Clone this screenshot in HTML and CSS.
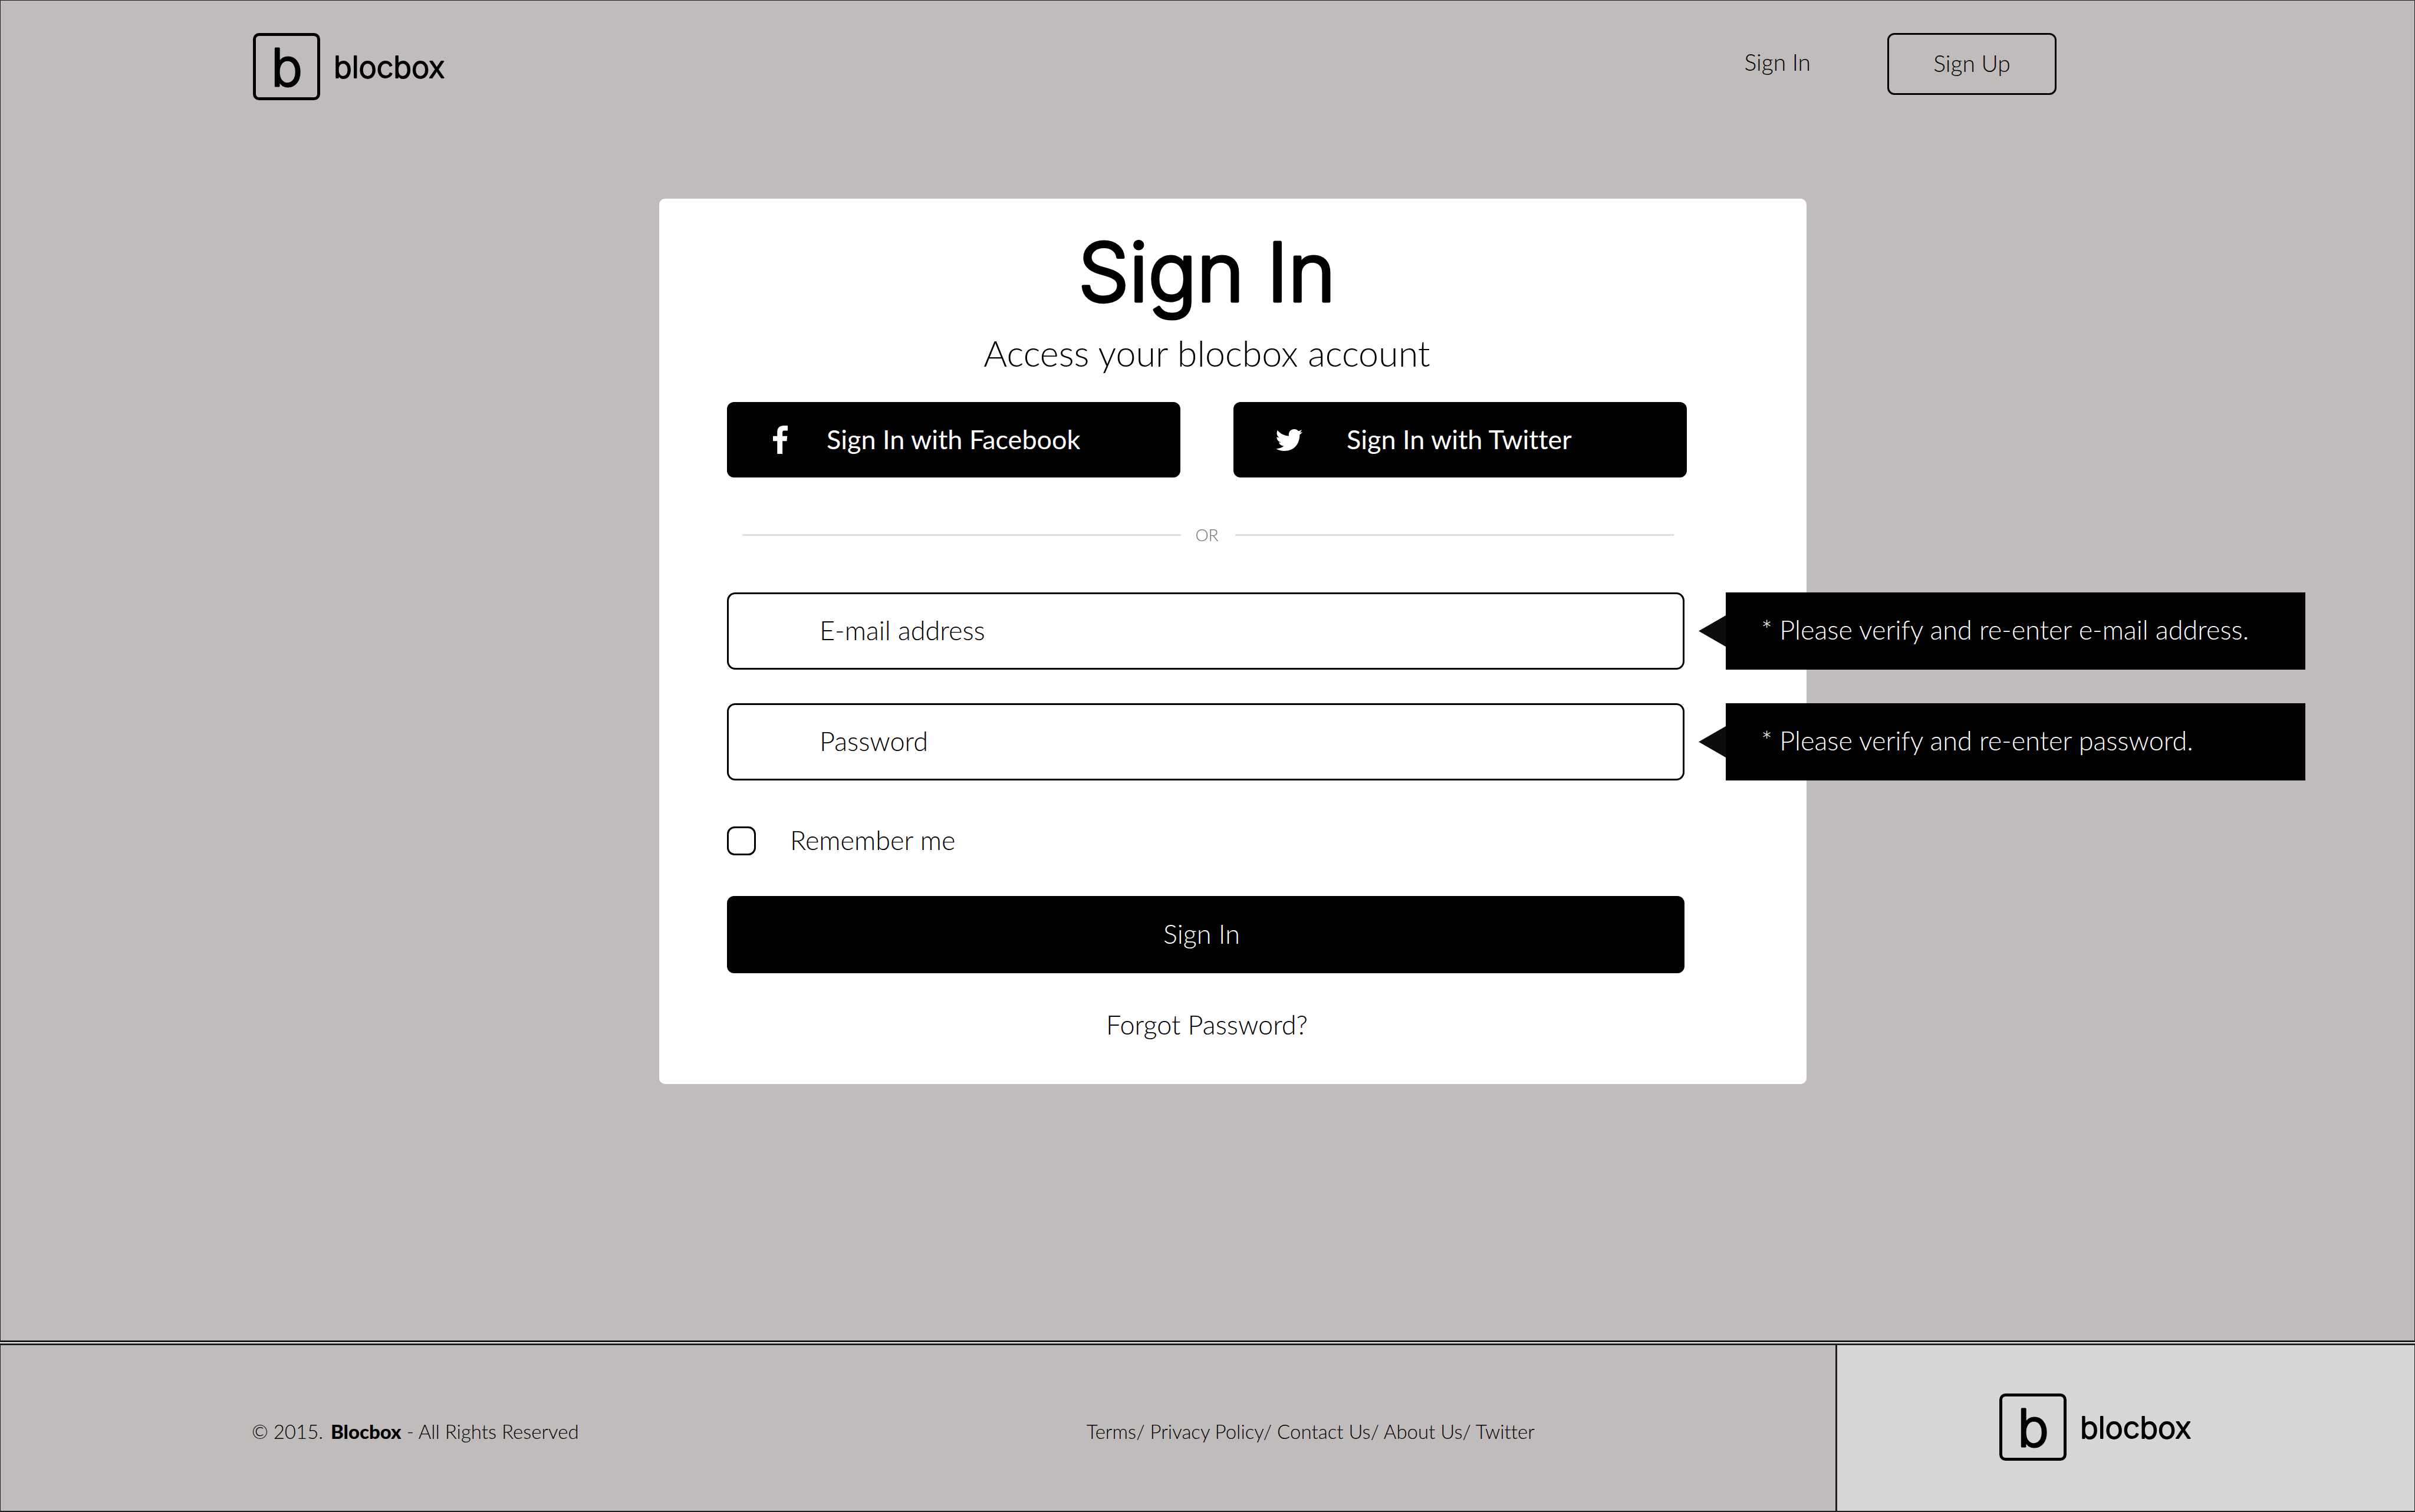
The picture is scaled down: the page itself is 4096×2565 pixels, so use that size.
FILE: index.html
```html
<!DOCTYPE html>
<html lang="en">
<head>
<meta charset="utf-8">
<title>Sign In - blocbox</title>
<link rel="stylesheet" href="styles.css">
</head>
<body>
<div class="page">
  <header class="header">
    <a class="logo" href="#" aria-label="blocbox">
      <svg class="logo-art" viewBox="0 0 330 114">
        <rect class="logo-box" x="2.5" y="2.5" width="109" height="109" rx="8"/>
        <text class="logo-mark" x="31" y="90">b</text>
        <text class="logo-word" x="137" y="76">blocbox</text>
      </svg>
    </a>
    <nav class="nav">
      <a class="nav-link" href="#">Sign In</a>
      <button class="nav-button" type="button">Sign Up</button>
    </nav>
  </header>

  <main class="main">
    <form class="card">
      <h1 class="title"><svg class="title-art"><text x="50%" y="132">Sign In</text></svg></h1>
      <p class="subtitle">Access your blocbox account</p>

      <div class="social">
        <button class="social-button" type="button">
          <svg class="icon-facebook" viewBox="60 57 110 211" aria-hidden="true"><path d="M92 268V172H60V135H92V104C92 74 110 57 142 57H170V94H145C135 94 131 98 131 108V135H167L163 172H131V268Z"/></svg>
          <span>Sign In with Facebook</span>
        </button>
        <button class="social-button social-twitter" type="button">
          <svg class="icon-twitter" viewBox="60 66 197 162" aria-hidden="true"><path d="M60 211C80 212 101 206 119 192C101 191 87 180 82 165C88 166 94 166 98 164C79 160 66 144 66 124C72 127 78 129 84 129C67 117 62 94 72 75C92 100 122 115 156 117C151 88 170 66 196 66C208 66 219 71 227 80C236 78 244 75 252 70C249 80 244 86 238 91C245 91 251 90 257 88C252 96 245 101 237 106C237 175 195 228 122 228C99 228 78 222 60 211Z"/></svg>
          <span>Sign In with Twitter</span>
        </button>
      </div>

      <div class="divider">OR</div>

      <div class="field">
        <input class="input" type="email" placeholder="E-mail address" aria-label="E-mail address" aria-describedby="email-error">
        <p class="error" id="email-error">* Please verify and re-enter e-mail address.</p>
      </div>
      <div class="field">
        <input class="input" type="password" placeholder="Password" aria-label="Password" aria-describedby="password-error">
        <p class="error" id="password-error">* Please verify and re-enter password.</p>
      </div>

      <label class="remember"><input class="checkbox" type="checkbox">Remember me</label>
      <button class="submit" type="submit">Sign In</button>
      <a class="forgot" href="#">Forgot Password?</a>
    </form>
  </main>
</div>

<footer class="footer">
  <div class="footer-info">
    <p class="copyright">© 2015. <strong>Blocbox</strong> - All Rights Reserved</p>
    <nav class="footer-links"><a href="#">Terms</a>/ <a href="#">Privacy Policy</a>/ <a href="#">Contact Us</a>/ <a href="#">About Us</a>/ <a href="#">Twitter</a></nav>
  </div>
  <div class="footer-brand">
    <a class="logo" href="#" aria-label="blocbox">
      <svg class="logo-art" viewBox="0 0 330 114">
        <rect class="logo-box" x="2.5" y="2.5" width="109" height="109" rx="8"/>
        <text class="logo-mark" x="31" y="90">b</text>
        <text class="logo-word" x="137" y="76">blocbox</text>
      </svg>
    </a>
  </div>
</footer>
</body>
</html>
```
FILE: styles.css
```css
* {
  box-sizing: border-box;
}

body {
  margin: 0;
  min-height: 100vh;
  display: flex;
  flex-direction: column;
  gap: 2px;
  background: #fff;
  color: #000;
  font-family: Lato, "Liberation Sans", sans-serif;
  font-weight: 300;
  font-size: 45px;
  font-variant-ligatures: none;
}

a {
  color: inherit;
  text-decoration: none;
}

p,
h1 {
  margin: 0;
}

button,
input {
  font: inherit;
  font-variant-ligatures: none;
  color: inherit;
}

.page {
  flex: 1;
  background: #c0bcbb;
  border: 1px solid #1d1d1b;
  border-bottom-width: 3px;
}

/* Header */
.header {
  display: flex;
  justify-content: space-between;
  align-items: flex-start;
  padding: 55px 607px 0 428px;
}

.logo-art {
  display: block;
  width: 330px;
  height: 114px;
  font-family: Inter, "Liberation Sans", sans-serif;
  font-weight: 300;
}

.logo-art text {
  stroke: #000;
  stroke-linejoin: round;
}

.logo-box {
  fill: none;
  stroke: #000;
  stroke-width: 5px;
}

.logo-mark {
  font-size: 88px;
  stroke-width: 3px;
}

.logo-word {
  font-size: 51px;
  stroke-width: 2px;
}

.nav {
  display: flex;
  align-items: center;
  gap: 130px;
  font-size: 39px;
}

.nav-link {
  padding-bottom: 8px;
}

.nav-button {
  width: 287px;
  height: 105px;
  padding: 0 0 3px;
  border: 3px solid #000;
  border-radius: 12px;
  background: none;
}

/* Sign-in card */
.main {
  padding: 167px 25% 0 1117px;
}

.card {
  width: 1946px;
  padding: 42px 203px 72px 115px;
  border-radius: 10px;
  background: #fff;
}

.title {
  font-family: Inter, "Liberation Sans", sans-serif;
  font-weight: 300;
  font-size: 137px;
}

.title-art {
  display: block;
  width: 100%;
  height: 180px;
  overflow: visible;
  text-anchor: middle;
  stroke: #000;
  stroke-width: 5px;
  stroke-linejoin: round;
}

.subtitle {
  font-size: 61px;
  line-height: 80px;
  text-align: center;
}

.social {
  display: grid;
  grid-template-columns: 1fr 1fr;
  gap: 90px;
  margin-top: 43px;
}

.social-button {
  display: flex;
  align-items: center;
  gap: 66px;
  height: 128px;
  padding: 0 78px;
  border: 0;
  border-radius: 12px;
  background: #000;
  color: #fff;
  font-weight: 400;
}

.social-button span {
  padding-bottom: 2px;
}

.social-twitter {
  gap: 75px;
  padding: 0 72px;
}

.icon-facebook {
  width: 25px;
  height: 48px;
  fill: #fff;
}

.icon-twitter {
  width: 45px;
  height: 37px;
  fill: #fff;
}

.divider {
  display: flex;
  align-items: center;
  gap: 24px;
  margin: 76px 22px 77px 26px;
  color: #707070;
  font-size: 28px;
  line-height: 42px;
}

.divider::before,
.divider::after {
  content: "";
  flex: 1;
  height: 3px;
  background: #dedede;
}

.divider::after {
  margin-left: 4px;
}

.field {
  position: relative;
  margin: 0 4px 57px 0;
}

.input {
  display: block;
  width: 100%;
  height: 131px;
  padding: 0 156px 4px 154px;
  border: 3px solid #000;
  border-radius: 14px;
  background: #fff;
}

.input::placeholder {
  color: #000;
  opacity: 1;
}

.error {
  position: absolute;
  top: 0;
  left: calc(100% + 70px);
  width: 983px;
  padding: 0 60px 4px;
  background: #000;
  color: #fff;
  line-height: 127px;
}

.error::before {
  content: "";
  position: absolute;
  top: 39px;
  right: 100%;
  width: 46px;
  height: 53px;
  background: #0c0c0b;
  clip-path: polygon(100% 0, 100% 100%, 0 50%);
}

.remember {
  display: flex;
  align-items: center;
  gap: 58px;
  margin-top: 75px;
  padding-bottom: 4px;
  line-height: 52px;
}

.checkbox {
  appearance: none;
  width: 49px;
  height: 49px;
  margin: 3px 0 0;
  border: 3px solid #000;
  border-radius: 13px;
  background: #fff;
}

.submit {
  display: block;
  width: calc(100% - 4px);
  height: 131px;
  margin-top: 65px;
  padding: 0 14px 4px 0;
  border: 0;
  border-radius: 12px;
  background: #000;
  color: #fff;
}

.forgot {
  display: block;
  margin-top: 60px;
  padding-bottom: 2px;
  line-height: 54px;
  text-align: center;
}

/* Footer */
.footer {
  display: flex;
  height: 286px;
  border: 1px solid #1d1d1b;
  border-width: 3px 1px 2px;
  background: #c0bcbb;
  font-size: 33px;
}

.footer-info {
  flex: 1;
  display: flex;
  align-items: center;
  justify-content: space-between;
  padding: 10px 510px 0 426px;
}

.footer-info strong {
  margin-left: 4px;
  font-weight: 900;
}

.footer-brand {
  display: flex;
  align-items: center;
  width: 982px;
  padding: 0 0 4px 275px;
  border-left: 3px solid #1d1d1b;
  background: #d6d6d6;
}
```
